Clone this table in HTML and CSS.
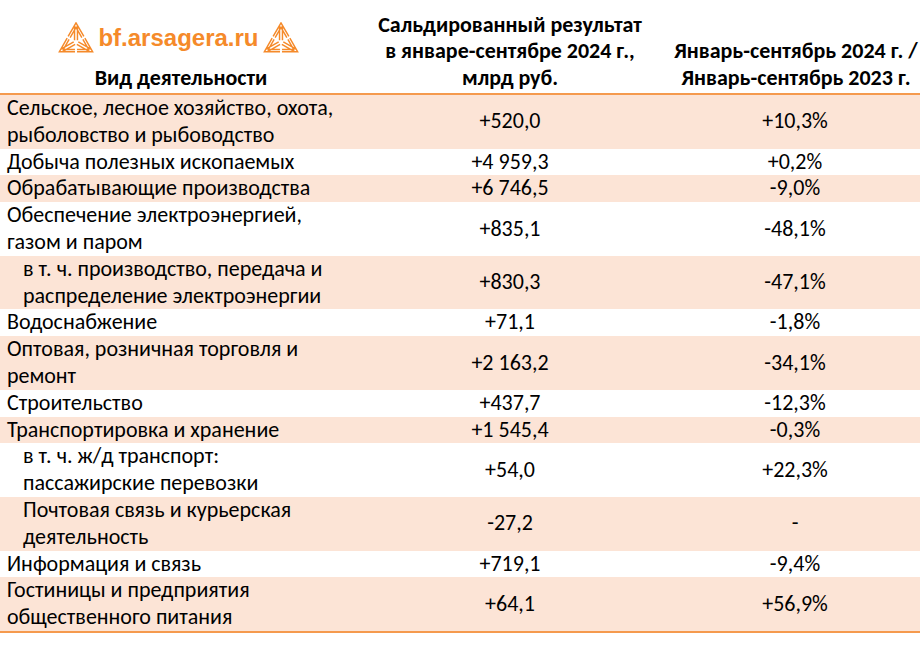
FILE: index.html
```html
<!DOCTYPE html>
<html lang="ru">
<head>
<meta charset="utf-8">
<title>Сальдированный результат</title>
<link rel="stylesheet" href="styles.css">
</head>
<body>
<svg class="defs" width="0" height="0" aria-hidden="true">
  <defs>
    <g id="arrow">
      <path d="M-1.6,-2 V-18 M1.6,-2 V-18 M-8.6,-6.2 L0,-21 L8.6,-6.2 M-6.4,-5 L0,-16 L6.4,-5"/>
    </g>
    <g id="triad">
      <use href="#arrow"/>
      <use href="#arrow" transform="rotate(120)"/>
      <use href="#arrow" transform="rotate(240)"/>
    </g>
  </defs>
</svg>
<table class="report">
  <colgroup>
    <col class="c-name">
    <col class="c-val">
    <col class="c-pct">
  </colgroup>
  <thead>
    <tr>
      <th class="h-name">
        <div class="logo">
          <svg class="logo-icon" viewBox="-19.5 -22 39 35"><use href="#triad"/></svg>
          <span class="logo-text">bf.arsagera.ru</span>
          <svg class="logo-icon" viewBox="-19.5 -22 39 35"><use href="#triad"/></svg>
        </div>
        <div class="h-line">Вид деятельности</div>
      </th>
      <th class="h-val">Сальдированный результат<br>в январе-сентябре 2024 г.,<br>млрд руб.</th>
      <th class="h-pct">Январь-сентябрь 2024 г. /<br>Январь-сентябрь 2023 г.</th>
    </tr>
  </thead>
  <tbody>
    <tr class="shade"><td>Сельское, лесное хозяйство, охота,<br>рыболовство и рыбоводство</td><td class="num">+520,0</td><td class="pct">+10,3%</td></tr>
    <tr><td>Добыча полезных ископаемых</td><td class="num">+4 959,3</td><td class="pct">+0,2%</td></tr>
    <tr class="shade"><td>Обрабатывающие производства</td><td class="num">+6 746,5</td><td class="pct">-9,0%</td></tr>
    <tr><td>Обеспечение электроэнергией,<br>газом и паром</td><td class="num">+835,1</td><td class="pct">-48,1%</td></tr>
    <tr class="shade"><td class="sub">в т. ч. производство, передача и<br>распределение электроэнергии</td><td class="num">+830,3</td><td class="pct">-47,1%</td></tr>
    <tr><td>Водоснабжение</td><td class="num">+71,1</td><td class="pct">-1,8%</td></tr>
    <tr class="shade"><td>Оптовая, розничная торговля и<br>ремонт</td><td class="num">+2 163,2</td><td class="pct">-34,1%</td></tr>
    <tr><td>Строительство</td><td class="num">+437,7</td><td class="pct">-12,3%</td></tr>
    <tr class="shade"><td>Транспортировка и хранение</td><td class="num">+1 545,4</td><td class="pct">-0,3%</td></tr>
    <tr><td class="sub">в т. ч. ж/д транспорт:<br>пассажирские перевозки</td><td class="num">+54,0</td><td class="pct">+22,3%</td></tr>
    <tr class="shade"><td class="sub">Почтовая связь и курьерская<br>деятельность</td><td class="num">-27,2</td><td class="pct">-</td></tr>
    <tr><td>Информация и связь</td><td class="num">+719,1</td><td class="pct">-9,4%</td></tr>
    <tr class="shade"><td>Гостиницы и предприятия<br>общественного питания</td><td class="num">+64,1</td><td class="pct">+56,9%</td></tr>
  </tbody>
</table>
</body>
</html>
```
FILE: styles.css
```css
html, body {
  margin: 0;
  padding: 0;
  background: #ffffff;
}
body {
  font-family: Carlito, "Open Sans", sans-serif;
  color: #000000;
}
.defs {
  position: absolute;
  width: 0;
  height: 0;
  overflow: hidden;
}
.report {
  width: 920px;
  border-collapse: collapse;
  table-layout: fixed;
  font-size: 22px;
  line-height: 26.8px;
}
.c-name { width: 362px; }
.c-val { width: 296px; }
.c-pct { width: 262px; }

thead th {
  height: 92px;
  padding: 0 0 1px 0;
  vertical-align: bottom;
  font-weight: bold;
  text-align: center;
  white-space: nowrap;
  border-bottom: 2px solid #f59a4e;
}
.h-pct { padding-left: 14px; }

.logo {
  display: flex;
  justify-content: center;
  align-items: center;
  gap: 4px;
  margin-bottom: 11px;
  margin-left: -5px;
}
.logo-icon {
  width: 36px;
  height: 32px;
  fill: none;
  stroke: #f58a2a;
  stroke-width: 1.6;
}
.logo-text {
  font-family: "Liberation Sans", Arial, sans-serif;
  font-weight: bold;
  font-size: 24px;
  line-height: 28px;
  color: #f58a2a;
}

tbody td {
  padding: 0;
  white-space: nowrap;
  vertical-align: middle;
}
tbody td:first-child { padding-left: 7px; }
tbody td.sub { padding-left: 23px; }
tbody td.num { text-align: center; }
tbody td.pct { text-align: center; padding-left: 12px; }
tbody tr.shade td { background: #fce4d6; }
tbody tr:last-child td { border-bottom: 2px solid #f59a4e; }
```
